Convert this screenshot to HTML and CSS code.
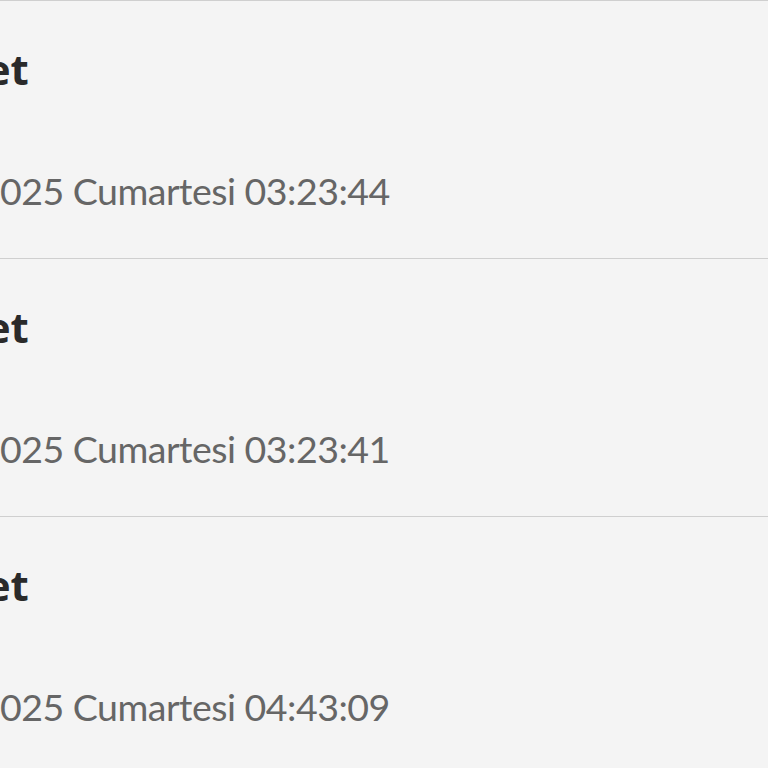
FILE: index.html
```html
<!DOCTYPE html>
<html lang="tr">
<head>
<meta charset="utf-8">
<link rel="stylesheet" href="styles.css">
</head>
<body>
<ul class="list">
  <li class="item">
    <div class="content">
      <div class="title">Hizmet</div>
      <div class="date">29.03.2025 Cumartesi 03:23:44</div>
    </div>
  </li>
  <li class="item">
    <div class="content">
      <div class="title">Hizmet</div>
      <div class="date">29.03.2025 Cumartesi 03:23:41</div>
    </div>
  </li>
  <li class="item">
    <div class="content">
      <div class="title">Hizmet</div>
      <div class="date">29.03.2025 Cumartesi 04:43:09</div>
    </div>
  </li>
</ul>
</body>
</html>
```
FILE: styles.css
```css
html, body {
  margin: 0;
  padding: 0;
  background: #f4f4f4;
  height: 100%;
}
body {
  font-family: Lato, "Liberation Sans", sans-serif;
  overflow: hidden;
}
.list {
  list-style: none;
  margin: 0;
  padding: 0;
  border-top: 1px solid #cfcfcf;
}
.item {
  height: 257px;
  border-bottom: 1px solid #cfcfcf;
  overflow: hidden;
}
.content {
  margin-left: -123px;
  padding-top: 43px;
}
.title {
  margin-left: 2px;
  font-family: "Open Sans", "Liberation Sans", sans-serif;
  font-size: 42px;
  line-height: 50px;
  font-weight: 700;
  color: #2a2a2a;
  white-space: nowrap;
}
.date {
  margin-top: 73px;
  font-size: 37.5px;
  letter-spacing: -0.5px;
  line-height: 48px;
  color: #666666;
  white-space: nowrap;
}
```
